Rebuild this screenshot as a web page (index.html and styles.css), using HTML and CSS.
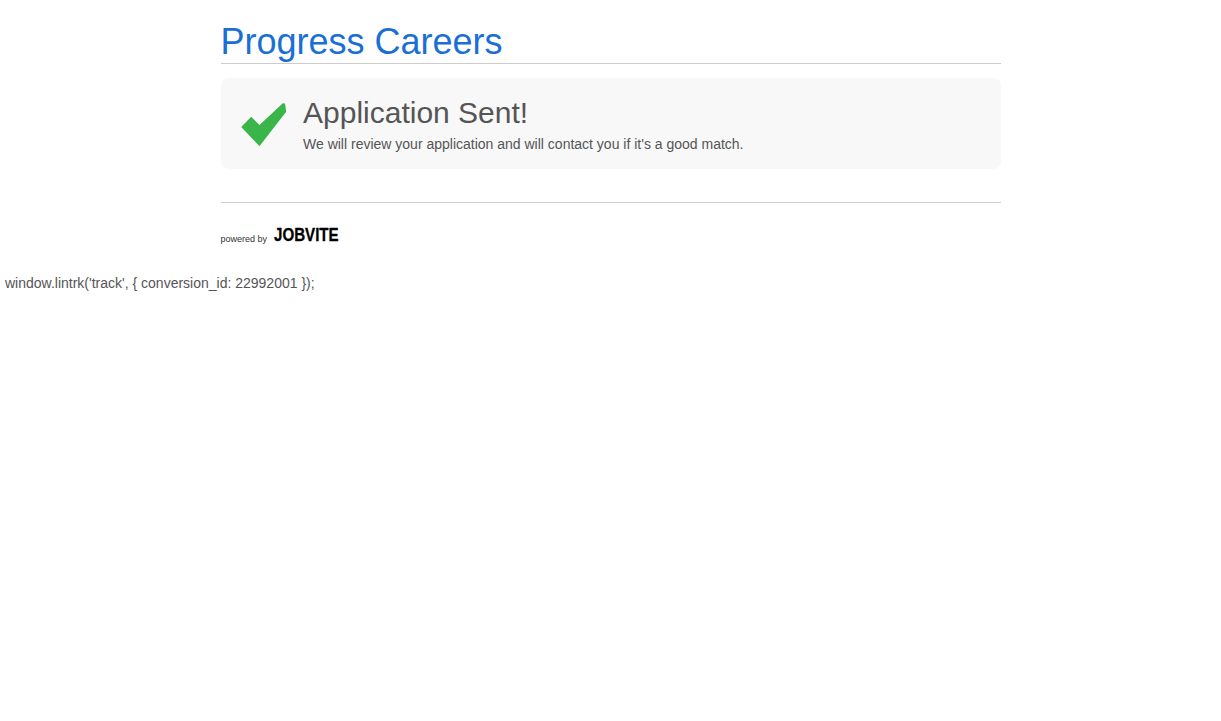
FILE: index.html
```html
<!DOCTYPE html>
<html lang="en">
<head>
    <meta charset="UTF-8">
    <title>Progress Careers</title>
    <link rel="stylesheet" href="styles.css">
</head>
<body>

<div class="container">
    <h1 class="company">Progress Careers</h1>

    <div class="message">
        <svg class="check" width="46" height="43" viewBox="0 0 46 43">
            <path d="M0.2 24 L10.2 13.7 L18.5 22 L41.8 0.3 Q44 0 44.2 1.5 L45.2 8.7 L19 42.5 Q18.5 43 17.8 42.5 Z" fill="#39b54a"/>
        </svg>
        <div class="message-text">
            <h2>Application Sent!</h2>
            <p>We will review your application and will contact you if it's a good match.</p>
        </div>
    </div>

    <div class="footer">
        <span class="powered">powered by</span>
        <span class="jobvite">JOBVITE</span>
    </div>
</div>

<div class="stray">window.lintrk('track', { conversion_id: 22992001 });</div>

</body>
</html>
```

FILE: styles.css
```css
body {
    margin: 0;
    background: white;
    color: #555;
    font-family: "Liberation Sans", Arial, sans-serif;
    font-size: 14px;
    line-height: 20px;
}
.container {
    width: 780px;
    margin: 0 auto;
    padding-top: 20px;
}
.company {
    margin: 0;
    height: 43px;
    font-size: 36px;
    font-weight: normal;
    line-height: 43px;
    color: #1a6fd6;
    border-bottom: 1px solid #ccc;
}
.message {
    display: flex;
    align-items: center;
    gap: 16.5px;
    height: 91px;
    margin-top: 14px;
    padding-left: 20px;
    background: #f8f8f8;
    border-radius: 8px;
}
.check {
    flex: none;
    margin-top: 1px;
}
.message-text h2 {
    margin: 1px 0 0;
    font-size: 30px;
    font-weight: normal;
    line-height: 36px;
}
.message-text p {
    margin: 3px 0 0;
}
.footer {
    display: flex;
    align-items: flex-end;
    gap: 7px;
    height: 42px;
    margin-top: 33px;
    border-top: 1px solid #ccc;
}
.powered {
    font-size: 9px;
    line-height: 12px;
    color: #333;
}
.jobvite {
    font-size: 18px;
    font-weight: bold;
    line-height: 19px;
    color: black;
    -webkit-text-stroke: 0.3px black;
    transform: scaleX(0.84);
    transform-origin: left center;
}
.stray {
    margin-top: 28px;
    padding-left: 5px;
}
```
